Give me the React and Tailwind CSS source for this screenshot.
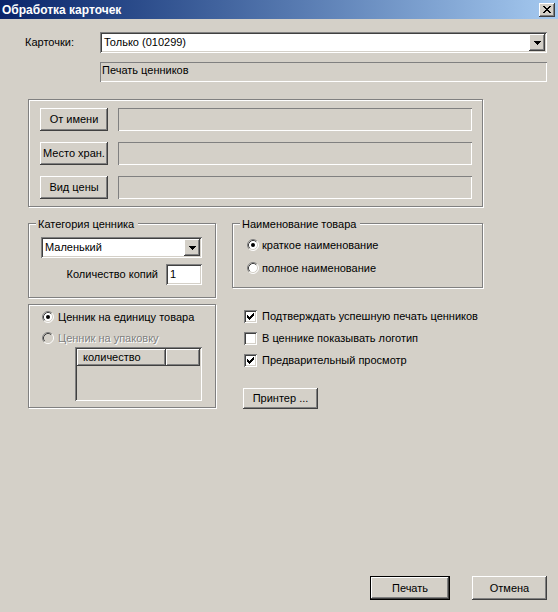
import React from 'react';

const raised =
  'shadow-[inset_-1px_-1px_#404040,inset_1px_1px_#ffffff,inset_-2px_-2px_#808080,inset_2px_2px_#d4d0c8]';
const sunken =
  'shadow-[inset_1px_1px_#808080,inset_-1px_-1px_#ffffff,inset_2px_2px_#404040,inset_-2px_-2px_#d4d0c8]';
const thinSunken = 'shadow-[inset_1px_1px_#808080,inset_-1px_-1px_#ffffff]';
const etched = 'border border-[#808080] shadow-[inset_1px_1px_#ffffff,1px_1px_#ffffff]';

function Button({ children, className = '', isDefault = false }) {
  if (isDefault) {
    return (
      <div className={`border border-black flex ${className}`}>
        <div className={`flex-1 flex items-center justify-center ${raised}`}>{children}</div>
      </div>
    );
  }
  return <div className={`flex items-center justify-center ${raised} ${className}`}>{children}</div>;
}

function DropArrow() {
  return (
    <svg width="7" height="4" viewBox="0 0 7 4" shapeRendering="crispEdges">
      <rect x="0" y="0" width="7" height="1" fill="#000" />
      <rect x="1" y="1" width="5" height="1" fill="#000" />
      <rect x="2" y="2" width="3" height="1" fill="#000" />
      <rect x="3" y="3" width="1" height="1" fill="#000" />
    </svg>
  );
}

function Combo({ value, className = '' }) {
  return (
    <div className={`flex bg-white ${sunken} p-[2px] ${className}`}>
      <div className="flex-1 flex items-center pl-[2px]">{value}</div>
      <div className={`w-[16px] flex items-center justify-center bg-[#d4d0c8] ${raised}`}>
        <DropArrow />
      </div>
    </div>
  );
}

function Radio({ checked, disabled }) {
  return (
    <svg width="12" height="12" viewBox="0 0 12 12" className="shrink-0">
      <circle cx="6" cy="6" r="5" fill={disabled ? '#d4d0c8' : '#ffffff'} />
      <path d="M2.11 9.89 A5.5 5.5 0 0 1 9.89 2.11" stroke="#808080" fill="none" />
      <path d="M9.89 2.11 A5.5 5.5 0 0 1 2.11 9.89" stroke="#ffffff" fill="none" />
      <path d="M2.82 9.18 A4.5 4.5 0 0 1 9.18 2.82" stroke="#404040" fill="none" />
      <path d="M9.18 2.82 A4.5 4.5 0 0 1 2.82 9.18" stroke="#d4d0c8" fill="none" />
      {checked && <circle cx="6" cy="6" r="2" fill="#000" />}
    </svg>
  );
}

function CheckMark() {
  const cols = [5, 6, 7, 6, 5, 4, 3];
  return (
    <svg width="13" height="13" viewBox="0 0 13 13" shapeRendering="crispEdges" className="absolute inset-0">
      {cols.map((y, i) => (
        <rect key={i} x={3 + i} y={y} width="1" height="3" fill="#000" />
      ))}
    </svg>
  );
}

function Checkbox({ checked, label }) {
  return (
    <div className="flex items-center h-[16px]">
      <div className={`relative w-[13px] h-[13px] bg-white ${sunken}`}>{checked && <CheckMark />}</div>
      <span className="ml-[5px]">{label}</span>
    </div>
  );
}

function Group({ caption, className = '', children }) {
  return (
    <div className={`relative ${etched} ${className}`}>
      {caption && (
        <span className="absolute top-[-6px] left-[7px] bg-[#d4d0c8] pl-[2px] pr-[4px] leading-[13px]">
          {caption}
        </span>
      )}
      {children}
    </div>
  );
}

export default function App() {
  const rows = ['От имени', 'Место хран.', 'Вид цены'];

  return (
    <div
      className="w-[558px] h-[612px] bg-[#d4d0c8] flex flex-col text-[11px] leading-[13px] text-black overflow-hidden"
      style={{ fontFamily: '"Liberation Sans", Arial, sans-serif' }}
    >
      {/* caption bar */}
      <div className="h-[19px] flex items-center justify-between pl-[2px] pr-[3px] bg-gradient-to-r from-[#0a246a] to-[#a6caf0]">
        <span className="text-white font-bold text-[12px] leading-[14px]">Обработка карточек</span>
        <div className={`w-[16px] h-[14px] flex items-center justify-center bg-[#d4d0c8] ${raised}`}>
          <svg width="8" height="7" viewBox="0 0 8 7" shapeRendering="crispEdges">
            <path d="M0 0h2v1h-2z M6 0h2v1h-2z M1 1h2v1h-2z M5 1h2v1h-2z M2 2h4v1h-4z M3 3h2v1h-2z M2 4h4v1h-4z M1 5h2v1h-2z M5 5h2v1h-2z M0 6h2v1h-2z M6 6h2v1h-2z" fill="#000" />
          </svg>
        </div>
      </div>

      <div className="flex-1 flex flex-col pl-[25px] pr-[11px] pt-[13px] pb-[12px]">
        <div className="flex items-center">
          <span className="w-[75px]">Карточки:</span>
          <Combo value="Только (010299)" className="flex-1 h-[21px]" />
        </div>
        <div className={`ml-[75px] mt-[9px] h-[20px] pl-[2px] pt-[2px] ${thinSunken}`}>Печать ценников</div>

        {/* source fields */}
        <Group className="ml-[3px] mt-[17px] w-[455px] h-[108px] pt-[8px] pl-[11px] flex flex-col gap-[11px]">
          {rows.map((r) => (
            <div key={r} className="flex gap-[10px]">
              <Button className="w-[68px] h-[23px]">{r}</Button>
              <div className={`w-[354px] h-[23px] ${thinSunken}`} />
            </div>
          ))}
        </Group>

        <div className="flex ml-[3px] mt-[16px] gap-[16px]">
          <div className="w-[188px] flex flex-col">
            <Group caption="Категория ценника" className="h-[75px] pt-[13px] pl-[12px]">
              <Combo value="Маленький" className="w-[161px] h-[21px]" />
              <div className="flex items-center justify-end mt-[6px] pr-[13px]">
                <span className="mr-[8px]">Количество копий</span>
                <div className={`w-[36px] h-[21px] bg-white flex items-center pl-[4px] ${sunken}`}>1</div>
              </div>
            </Group>

            <Group className="mt-[6px] h-[104px] pt-[4px] pl-[13px]">
              <div className="flex items-center h-[16px]">
                <Radio checked />
                <span className="ml-[4px]">Ценник на единицу товара</span>
              </div>
              <div className="flex items-center h-[16px] mt-[5px]">
                <Radio disabled />
                <span className="ml-[4px] text-[#808080] [text-shadow:1px_1px_#ffffff]">Ценник на упаковку</span>
              </div>
              <div className={`ml-[33px] mt-[1px] w-[127px] h-[54px] p-[2px] ${sunken}`}>
                <div className="flex h-[17px]">
                  <div className={`w-[89px] flex items-center pl-[6px] ${raised}`}>количество</div>
                  <div className={`flex-1 ${raised}`} />
                </div>
              </div>
            </Group>
          </div>

          <div className="w-[251px] flex flex-col">
            <Group caption="Наименование товара" className="h-[65px] pt-[13px] pl-[14px] flex flex-col gap-[7px]">
              <div className="flex items-center h-[16px]">
                <Radio checked />
                <span className="ml-[3px]">краткое наименование</span>
              </div>
              <div className="flex items-center h-[16px]">
                <Radio />
                <span className="ml-[3px]">полное наименование</span>
              </div>
            </Group>

            <div className="ml-[12px] mt-[20px] flex flex-col gap-[6px]">
              <Checkbox checked label="Подтверждать успешную печать ценников" />
              <Checkbox label="В ценнике показывать логотип" />
              <Checkbox checked label="Предварительный просмотр" />
            </div>
            <Button className="ml-[11px] mt-[20px] w-[75px] h-[21px]">Принтер ...</Button>
          </div>
        </div>

        <div className="mt-auto flex justify-end gap-[22px]">
          <Button isDefault className="w-[80px] h-[24px]">Печать</Button>
          <Button className="w-[75px] h-[24px]">Отмена</Button>
        </div>
      </div>
    </div>
  );
}
